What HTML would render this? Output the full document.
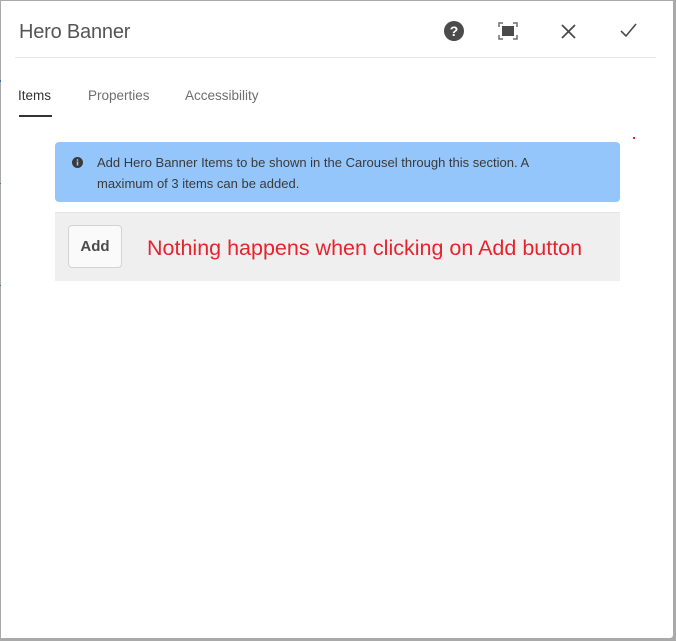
<!DOCTYPE html>
<html><head><style>
html,body{margin:0;padding:0;width:676px;height:641px;background:#a9a9a9;overflow:hidden;font-family:"Liberation Sans",sans-serif;}
.panel{position:absolute;left:1px;top:1px;width:672px;height:637px;background:#fff;border-radius:0 0 3px 0;}
.title{position:absolute;left:18px;top:20px;font-size:20px;color:#555;letter-spacing:-0.2px;}
.div{position:absolute;left:14px;top:56px;width:641px;height:1px;background:#e8e8e8;}
.tab{position:absolute;top:87px;font-size:13.5px;color:#6e6e6e;}
.ul{position:absolute;left:18px;top:114px;width:33px;height:2px;background:#323232;}
.info{position:absolute;left:54px;top:141px;width:565px;height:60px;background:#94c6fc;border-radius:4px;}
.info p{margin:0;position:absolute;left:42px;top:10px;width:460px;font-size:13px;line-height:21px;color:#3a3a3a;}
.gray{position:absolute;left:54px;top:211px;width:565px;height:68px;background:#efefef;border-top:1px solid #e4e4e4;}
.btn{position:absolute;left:13px;top:12px;width:52px;height:41px;background:#fafafa;border:1px solid #d3d3d3;border-radius:4px;font-size:15px;font-weight:bold;color:#4b4b4b;text-align:center;line-height:41px;}
.red{position:absolute;left:92px;top:23px;font-size:21.5px;color:#e8232d;}
</style></head><body>
<div style="position:absolute;left:0;top:80px;width:2px;height:2px;background:#3b6db4"></div>
<div style="position:absolute;left:0;top:183px;width:2px;height:1px;background:#3b6db4"></div>
<div style="position:absolute;left:0;top:285px;width:2px;height:1px;background:#3b6db4"></div>
<div class="panel">
<div class="title">Hero Banner</div>
<svg style="position:absolute;left:442px;top:19px" width="22" height="22" viewBox="0 0 22 22"><circle cx="11" cy="11" r="10" fill="#4b4b4b"/><text x="11" y="16" font-family="Liberation Sans" font-weight="bold" font-size="14" fill="#fff" text-anchor="middle">?</text></svg>
<svg style="position:absolute;left:497px;top:21px" width="20" height="18" viewBox="0 0 20 18" fill="none" stroke="#6e6e6e" stroke-width="1.5"><path d="M1 5V1h4M15 1h4v4M19 13v4h-4M5 17H1v-4"/><rect x="4" y="4" width="12" height="10" fill="#4b4b4b" stroke="none"/></svg>
<svg style="position:absolute;left:560px;top:23px" width="15" height="15" viewBox="0 0 15 15" stroke="#4b4b4b" stroke-width="1.8"><path d="M1 1L14 14M14 1L1 14"/></svg>
<svg style="position:absolute;left:619px;top:22px" width="17" height="15" viewBox="0 0 17 15" fill="none" stroke="#4b4b4b" stroke-width="1.6"><path d="M1 8l5 5L16 1"/></svg>
<div class="div"></div>
<div class="tab" style="left:17px;color:#323232">Items</div>
<div class="tab" style="left:87px">Properties</div>
<div class="tab" style="left:184px">Accessibility</div>
<div class="ul"></div>
<div style="position:absolute;left:632px;top:136px;width:2px;height:2px;background:#e8232d"></div>
<div class="info">
<svg style="position:absolute;left:17px;top:15px" width="11" height="11" viewBox="0 0 11 11"><circle cx="5.5" cy="5.5" r="5.5" fill="#3a3a3a"/><rect x="4.7" y="4.5" width="1.6" height="4" fill="#94c6fc"/><circle cx="5.5" cy="3" r="0.9" fill="#94c6fc"/></svg>
<p>Add Hero Banner Items to be shown in the Carousel through this section. A maximum of 3 items can be added.</p>
</div>
<div class="gray">
<div class="btn">Add</div>
<div class="red">Nothing happens when clicking on Add button</div>
</div>
</div>
</body></html>
